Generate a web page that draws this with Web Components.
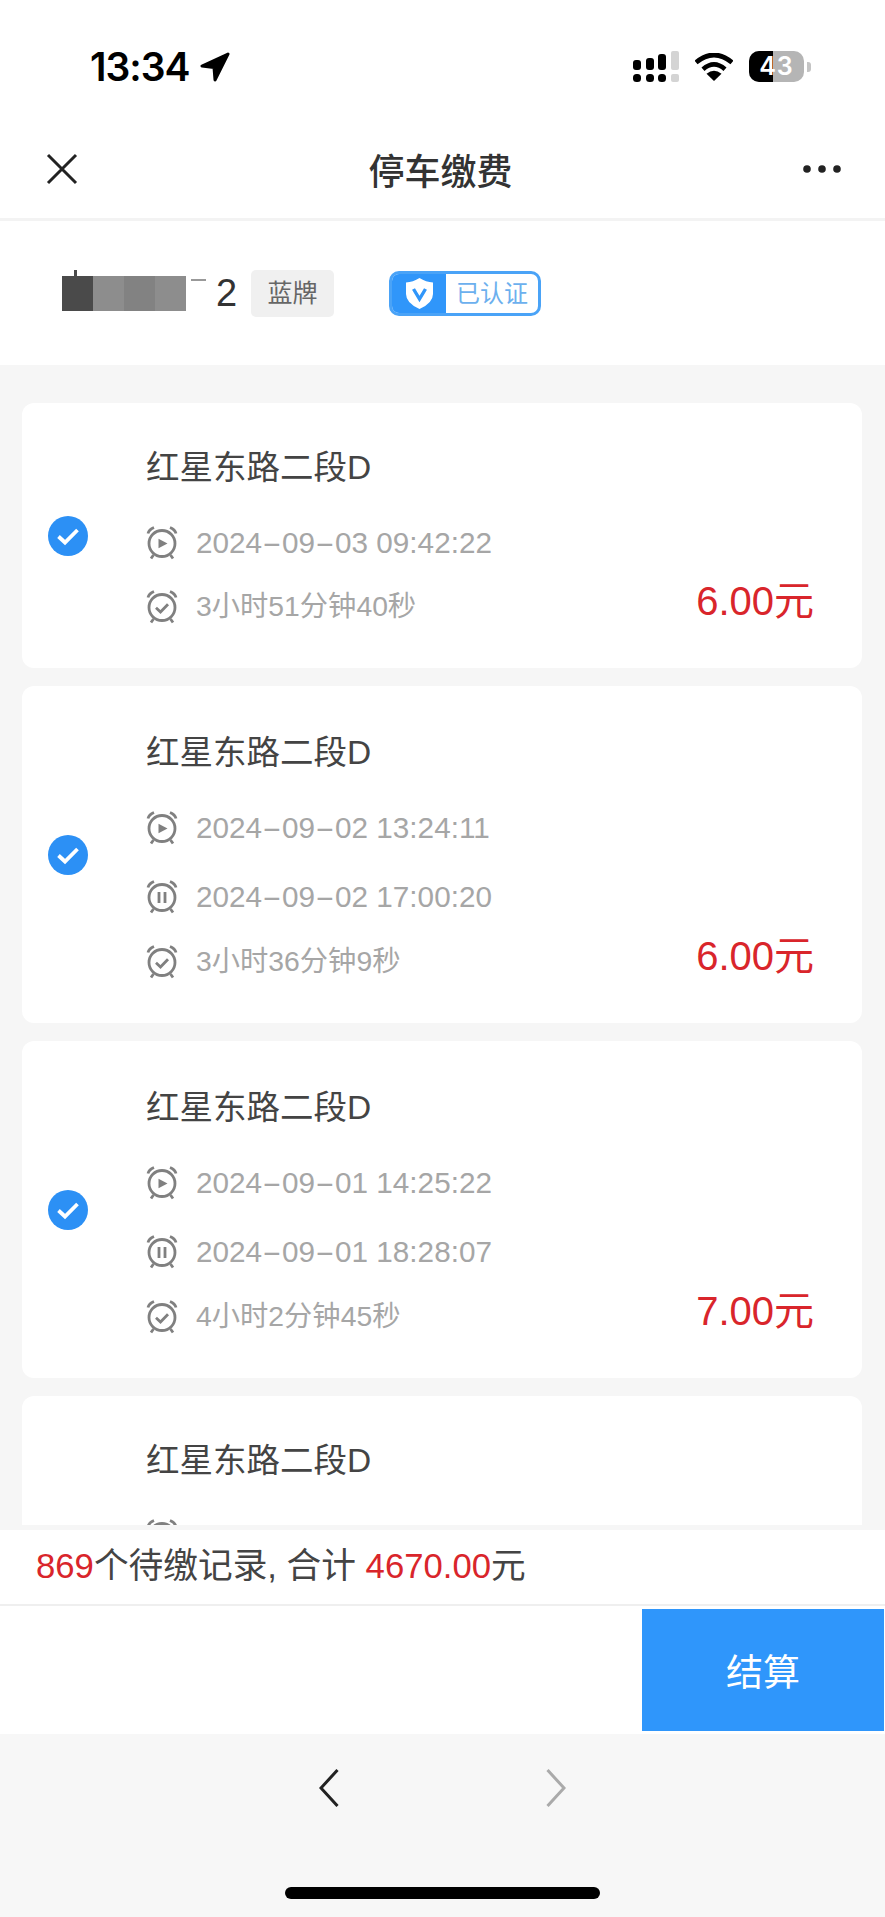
<!DOCTYPE html>
<html lang="zh">
<head>
<meta charset="utf-8">
<title>停车缴费</title>
<style>
  html, body { margin: 0; padding: 0; background: #f6f6f6; }
  body { font-family: "Liberation Sans", "Noto Sans CJK SC", sans-serif; }
</style>
</head>
<body>
<pay-app>
  <status-bar slot="top" time="13:34" battery="43"></status-bar>
  <nav-bar slot="top">停车缴费</nav-bar>
  <plate-band slot="top" last="2" tag="蓝牌" badge="已认证"></plate-band>

  <parking-card site="红星东路二段D" start="2024-09-03 09:42:22" duration="3小时51分钟40秒" fee="6.00"></parking-card>
  <parking-card site="红星东路二段D" start="2024-09-02 13:24:11" end="2024-09-02 17:00:20" duration="3小时36分钟9秒" fee="6.00"></parking-card>
  <parking-card site="红星东路二段D" start="2024-09-01 14:25:22" end="2024-09-01 18:28:07" duration="4小时2分钟45秒" fee="7.00"></parking-card>
  <parking-card style="min-height: 338px" site="红星东路二段D" start="" end="" duration="" fee=""></parking-card>

  <pay-footer slot="bottom" count="869" total="4670.00"></pay-footer>
  <browser-toolbar slot="bottom"></browser-toolbar>
</pay-app>

<script>
class PayApp extends HTMLElement {
    constructor() {
        super();
        this.attachShadow({mode: "open"}).innerHTML = `
        <style>
            :host { display: flex; flex-direction: column; width: 885px; height: 1917px; overflow: hidden; background: #f6f6f6; }
            .list { flex: 1; min-height: 0; overflow: hidden; display: flex; flex-direction: column; gap: 18px; padding: 38px 23px 0 22px; }
        </style>
        <slot name="top"></slot>
        <div class="list"><slot></slot></div>
        <slot name="bottom"></slot>`;
    }
}

class StatusBar extends HTMLElement {
    constructor() {
        super();
        this.attachShadow({mode: "open"});
    }
    connectedCallback() {
        const battery = this.getAttribute("battery");
        this.shadowRoot.innerHTML = `
        <style>
            :host { display: flex; justify-content: space-between; box-sizing: border-box; height: 110px; padding: 51px 74px 0 90px; background: #fff; color: #000; font-family: Inter, "Liberation Sans", sans-serif; }
            .left, .right { display: flex; align-items: center; height: 31px; }
            .time { flex: none; font-size: 39px; font-weight: 600; letter-spacing: -1px; width: 110px; }
            .right svg { display: block; }
            .wifi { margin: 0 16px; }
            .batt { position: relative; width: 55px; height: 31px; border-radius: 10px; overflow: hidden; background: #b5b5b5; color: #fff; font-size: 25px; font-weight: 600; line-height: 31px; text-align: center; letter-spacing: 1px; }
            .batt i { position: absolute; left: 0; top: 0; bottom: 0; width: 24px; background: #000; }
            .batt span { position: relative; }
            .nub { width: 4px; height: 10px; margin-left: 3px; border-radius: 0 3px 3px 0; background: #c4c4c4; }
        </style>
        <div class="left">
            <span class="time">${this.getAttribute("time")}</span>
            <svg width="30" height="30" viewBox="0 0 30 30"><path d="M28 2 L2 14 L14 15.5 L15 28 Z" fill="#000" stroke="#000" stroke-width="3" stroke-linejoin="round"/></svg>
        </div>
        <div class="right">
            <svg width="46" height="31" viewBox="0 0 46 31" fill="#000">
                <rect x="0" y="9" width="8" height="10" rx="3"/><rect x="13" y="7" width="8" height="12" rx="3"/><rect x="25" y="3" width="8" height="16" rx="3"/><rect x="38" y="0" width="8" height="19" rx="2" fill="#d4d4d4"/>
                <rect x="0" y="23" width="8" height="8" rx="3.5"/><rect x="13" y="23" width="8" height="8" rx="3.5"/><rect x="25" y="23" width="8" height="8" rx="3.5"/><rect x="38" y="23" width="8" height="8" rx="2" fill="#d4d4d4"/>
            </svg>
            <svg class="wifi" width="38" height="28" viewBox="0 0 38 28">
                <path d="M1 9.5 Q19 -5.5 37 9.5" fill="none" stroke="#000" stroke-width="4.8"/>
                <path d="M8 16.2 Q19 6.5 30 16.2" fill="none" stroke="#000" stroke-width="4.6"/>
                <path d="M19 28 L11.5 20.8 Q19 14.8 26.5 20.8 Z" fill="#000"/>
            </svg>
            <div class="batt"><i></i><span>${battery}</span></div>
            <div class="nub"></div>
        </div>`;
    }
}

class NavBar extends HTMLElement {
    constructor() {
        super();
        this.attachShadow({mode: "open"}).innerHTML = `
        <style>
            :host { display: flex; align-items: center; justify-content: space-between; box-sizing: border-box; height: 111px; padding: 10px 44px 0 46px; background: #fff; border-bottom: 3px solid #f3f3f3; }
            .title { font-size: 36px; font-weight: 500; color: #333; }
            svg { display: block; }
        </style>
        <svg width="32" height="32" viewBox="0 0 32 32"><path d="M2 2 L30 30 M30 2 L2 30" stroke="#222" stroke-width="3" fill="none"/></svg>
        <div class="title"><slot></slot></div>
        <svg width="38" height="8" viewBox="0 0 38 8" fill="#222"><circle cx="4" cy="4" r="3.8"/><circle cx="19" cy="4" r="3.8"/><circle cx="34" cy="4" r="3.8"/></svg>`;
    }
}

class PlateBand extends HTMLElement {
    constructor() {
        super();
        this.attachShadow({mode: "open"});
    }
    connectedCallback() {
        this.shadowRoot.innerHTML = `
        <style>
            :host { display: flex; align-items: center; box-sizing: border-box; height: 144px; padding-left: 62px; background: #fff; }
            .mask { display: flex; align-items: flex-start; width: 145px; height: 35px; }
            .mask b { display: block; height: 35px; }
            .mask .dark { position: relative; width: 31px; background: #4a4a4a; }
            .mask .dark::before { content: ""; position: absolute; left: 12px; top: -6px; width: 3px; height: 6px; background: #4a4a4a; }
            .mask .blur { width: 31px; background: #8d8d8d; }
            .mask .mid { background: #828282; }
            .mask .dash { width: 15px; height: 2px; margin: 3px 0 0 5px; background: #999; }
            .last { width: 44px; padding-left: 9px; box-sizing: border-box; font-size: 38px; color: #333; line-height: 47px; }
            .tag { width: 83px; height: 47px; line-height: 47px; text-align: center; background: #f0f0f0; border-radius: 5px; font-size: 25px; color: #666; }
            .badge { display: flex; box-sizing: border-box; width: 152px; height: 45px; margin-left: 55px; border: 3px solid #4aa3f7; border-radius: 10px; overflow: hidden; }
            .shield { display: flex; align-items: center; justify-content: center; width: 54px; background: #3096fa; }
            .txt { flex: 1; text-align: center; font-size: 24px; line-height: 39px; color: #6cb0ee; }
        </style>
        <div class="mask"><b class="dark"></b><b class="blur"></b><b class="blur mid"></b><b class="blur"></b><b class="dash"></b></div>
        <div class="last">${this.getAttribute("last")}</div>
        <div class="tag">${this.getAttribute("tag")}</div>
        <div class="badge">
            <div class="shield">
                <svg width="27" height="31" viewBox="0 0 27 31"><path d="M13.5 0 Q20 4 27 4.5 V16 Q27 25 13.5 31 Q0 25 0 16 V4.5 Q7 4 13.5 0 Z" fill="#fff"/><path d="M7.5 11 L13.5 21 L19.5 11" fill="none" stroke="#3096fa" stroke-width="3.4"/></svg>
            </div>
            <div class="txt">${this.getAttribute("badge")}</div>
        </div>`;
    }
}

class ClockRow extends HTMLElement {
    constructor() {
        super();
        this.attachShadow({mode: "open"});
    }
    connectedCallback() {
        const marks = {
            start: `<path d="M12.5 12.8 L21.5 17.5 L12.5 22.2 Z" fill="#808080" stroke="none"/>`,
            end: `<path d="M13 12 V23 M19 12 V23" stroke-width="2.8"/>`,
            done: `<path d="M10 17.8 L14.5 22 L22 14.2" stroke-width="2.8"/>`
        };
        const kind = this.getAttribute("kind");
        this.shadowRoot.innerHTML = `
        <style>
            :host { display: flex; align-items: center; height: 33px; font-size: 29.7px; color: #a6a6a6; white-space: nowrap; }
            :host([kind="done"]) { font-size: 28.3px; }
            svg { display: block; flex: none; margin-right: 18px; }
            .t { line-height: 33px; height: 33px; }
        </style>
        <svg width="32" height="34" viewBox="0 0 32 34" fill="none" stroke="#808080" stroke-width="2.8">
            <circle cx="16" cy="17.5" r="13"/>
            <path d="M2 7.5 Q3 3.5 8 1.5 M30 7.5 Q29 3.5 24 1.5"/>
            <path d="M7.5 29 L5 32.5 M24.5 29 L27 32.5"/>
            ${marks[kind]}
        </svg>
        <div class="t"><slot></slot></div>`;
    }
}

class ParkingCard extends HTMLElement {
    constructor() {
        super();
        this.attachShadow({mode: "open"});
    }
    connectedCallback() {
        const dashed = (d) => d.replace(/-/g, '<span class="dash">-</span>');
        const start = this.getAttribute("start");
        const end = this.getAttribute("end");
        const fee = this.getAttribute("fee");
        this.shadowRoot.innerHTML = `
        <style>
            :host { position: relative; display: flex; flex: none; align-items: center; background: #fff; border-radius: 12px; }
            .check { flex: none; display: block; width: 40px; height: 40px; margin: 0 58px 0 26px; }
            .body { flex: 1; align-self: flex-start; padding: 44px 0 45px; }
            .body.two { padding-top: 46px; }
            .site { font-size: 33.5px; line-height: 42px; color: #444; }
            clock-row { margin-top: 37px; }
            clock-row.last { margin-top: 31px; }
            .two clock-row.mid { margin-top: 36px; }
            .two clock-row.last { margin-top: 32px; }
            .dash { display: inline-block; width: 20px; text-align: center; transform: scaleX(2); }
            .fee { position: absolute; right: 48px; bottom: 44px; font-size: 40px; line-height: 46px; color: #d9252b; }
        </style>
        <svg class="check" viewBox="0 0 40 40"><circle cx="20" cy="20" r="20" fill="#2c90f5"/><path d="M10.5 20.5 L17 26.5 L29.5 14" fill="none" stroke="#fff" stroke-width="3.8"/></svg>
        <div class="body ${end ? "two" : ""}">
            <div class="site">${this.getAttribute("site")}</div>
            <clock-row kind="start">${dashed(start)}</clock-row>
            ${end ? `<clock-row class="mid" kind="end">${dashed(end)}</clock-row>` : ""}
            <clock-row class="last" kind="done">${this.getAttribute("duration")}</clock-row>
        </div>
        ${fee ? `<div class="fee">${fee}元</div>` : ""}`;
    }
}

class PayFooter extends HTMLElement {
    constructor() {
        super();
        this.attachShadow({mode: "open"});
    }
    connectedCallback() {
        this.shadowRoot.innerHTML = `
        <style>
            :host { display: block; background: #fff; border-top: 5px solid #f6f6f6; margin-top: -5px; position: relative; }
            .sum { box-sizing: border-box; height: 76px; padding: 0 0 0 36px; font-size: 34.7px; line-height: 72px; color: #444; border-bottom: 2px solid #efefef; white-space: pre; }
            .sum em { font-style: normal; color: #d9252b; }
            .action { display: flex; justify-content: flex-end; box-sizing: border-box; height: 128px; padding: 3px 1px 3px 0; }
            .pay { width: 242px; background: #2f96fb; color: #fff; font-size: 37px; display: flex; align-items: center; justify-content: center; }
        </style>
        <div class="sum"><em>${this.getAttribute("count")}</em>个待缴记录, 合计 <em>${this.getAttribute("total")}</em>元</div>
        <div class="action"><div class="pay">结算</div></div>`;
    }
}

class BrowserToolbar extends HTMLElement {
    constructor() {
        super();
        this.attachShadow({mode: "open"}).innerHTML = `
        <style>
            :host { display: block; box-sizing: border-box; height: 183px; padding-top: 35px; background: #f7f7f7; }
            .arrows { display: flex; justify-content: center; gap: 207px; }
            svg { display: block; }
            .home { width: 315px; height: 12px; margin: 80px auto 0; border-radius: 6px; background: #000; }
        </style>
        <div class="arrows">
            <svg width="20" height="38" viewBox="0 0 20 38"><path d="M18.5 1 L2 19 L18.5 37" fill="none" stroke="#222" stroke-width="3"/></svg>
            <svg width="20" height="38" viewBox="0 0 20 38"><path d="M1.5 1 L18 19 L1.5 37" fill="none" stroke="#aaa" stroke-width="3"/></svg>
        </div>
        <div class="home"></div>`;
    }
}

customElements.define("pay-app", PayApp);
customElements.define("status-bar", StatusBar);
customElements.define("nav-bar", NavBar);
customElements.define("plate-band", PlateBand);
customElements.define("clock-row", ClockRow);
customElements.define("parking-card", ParkingCard);
customElements.define("pay-footer", PayFooter);
customElements.define("browser-toolbar", BrowserToolbar);
</script>
</body>
</html>
